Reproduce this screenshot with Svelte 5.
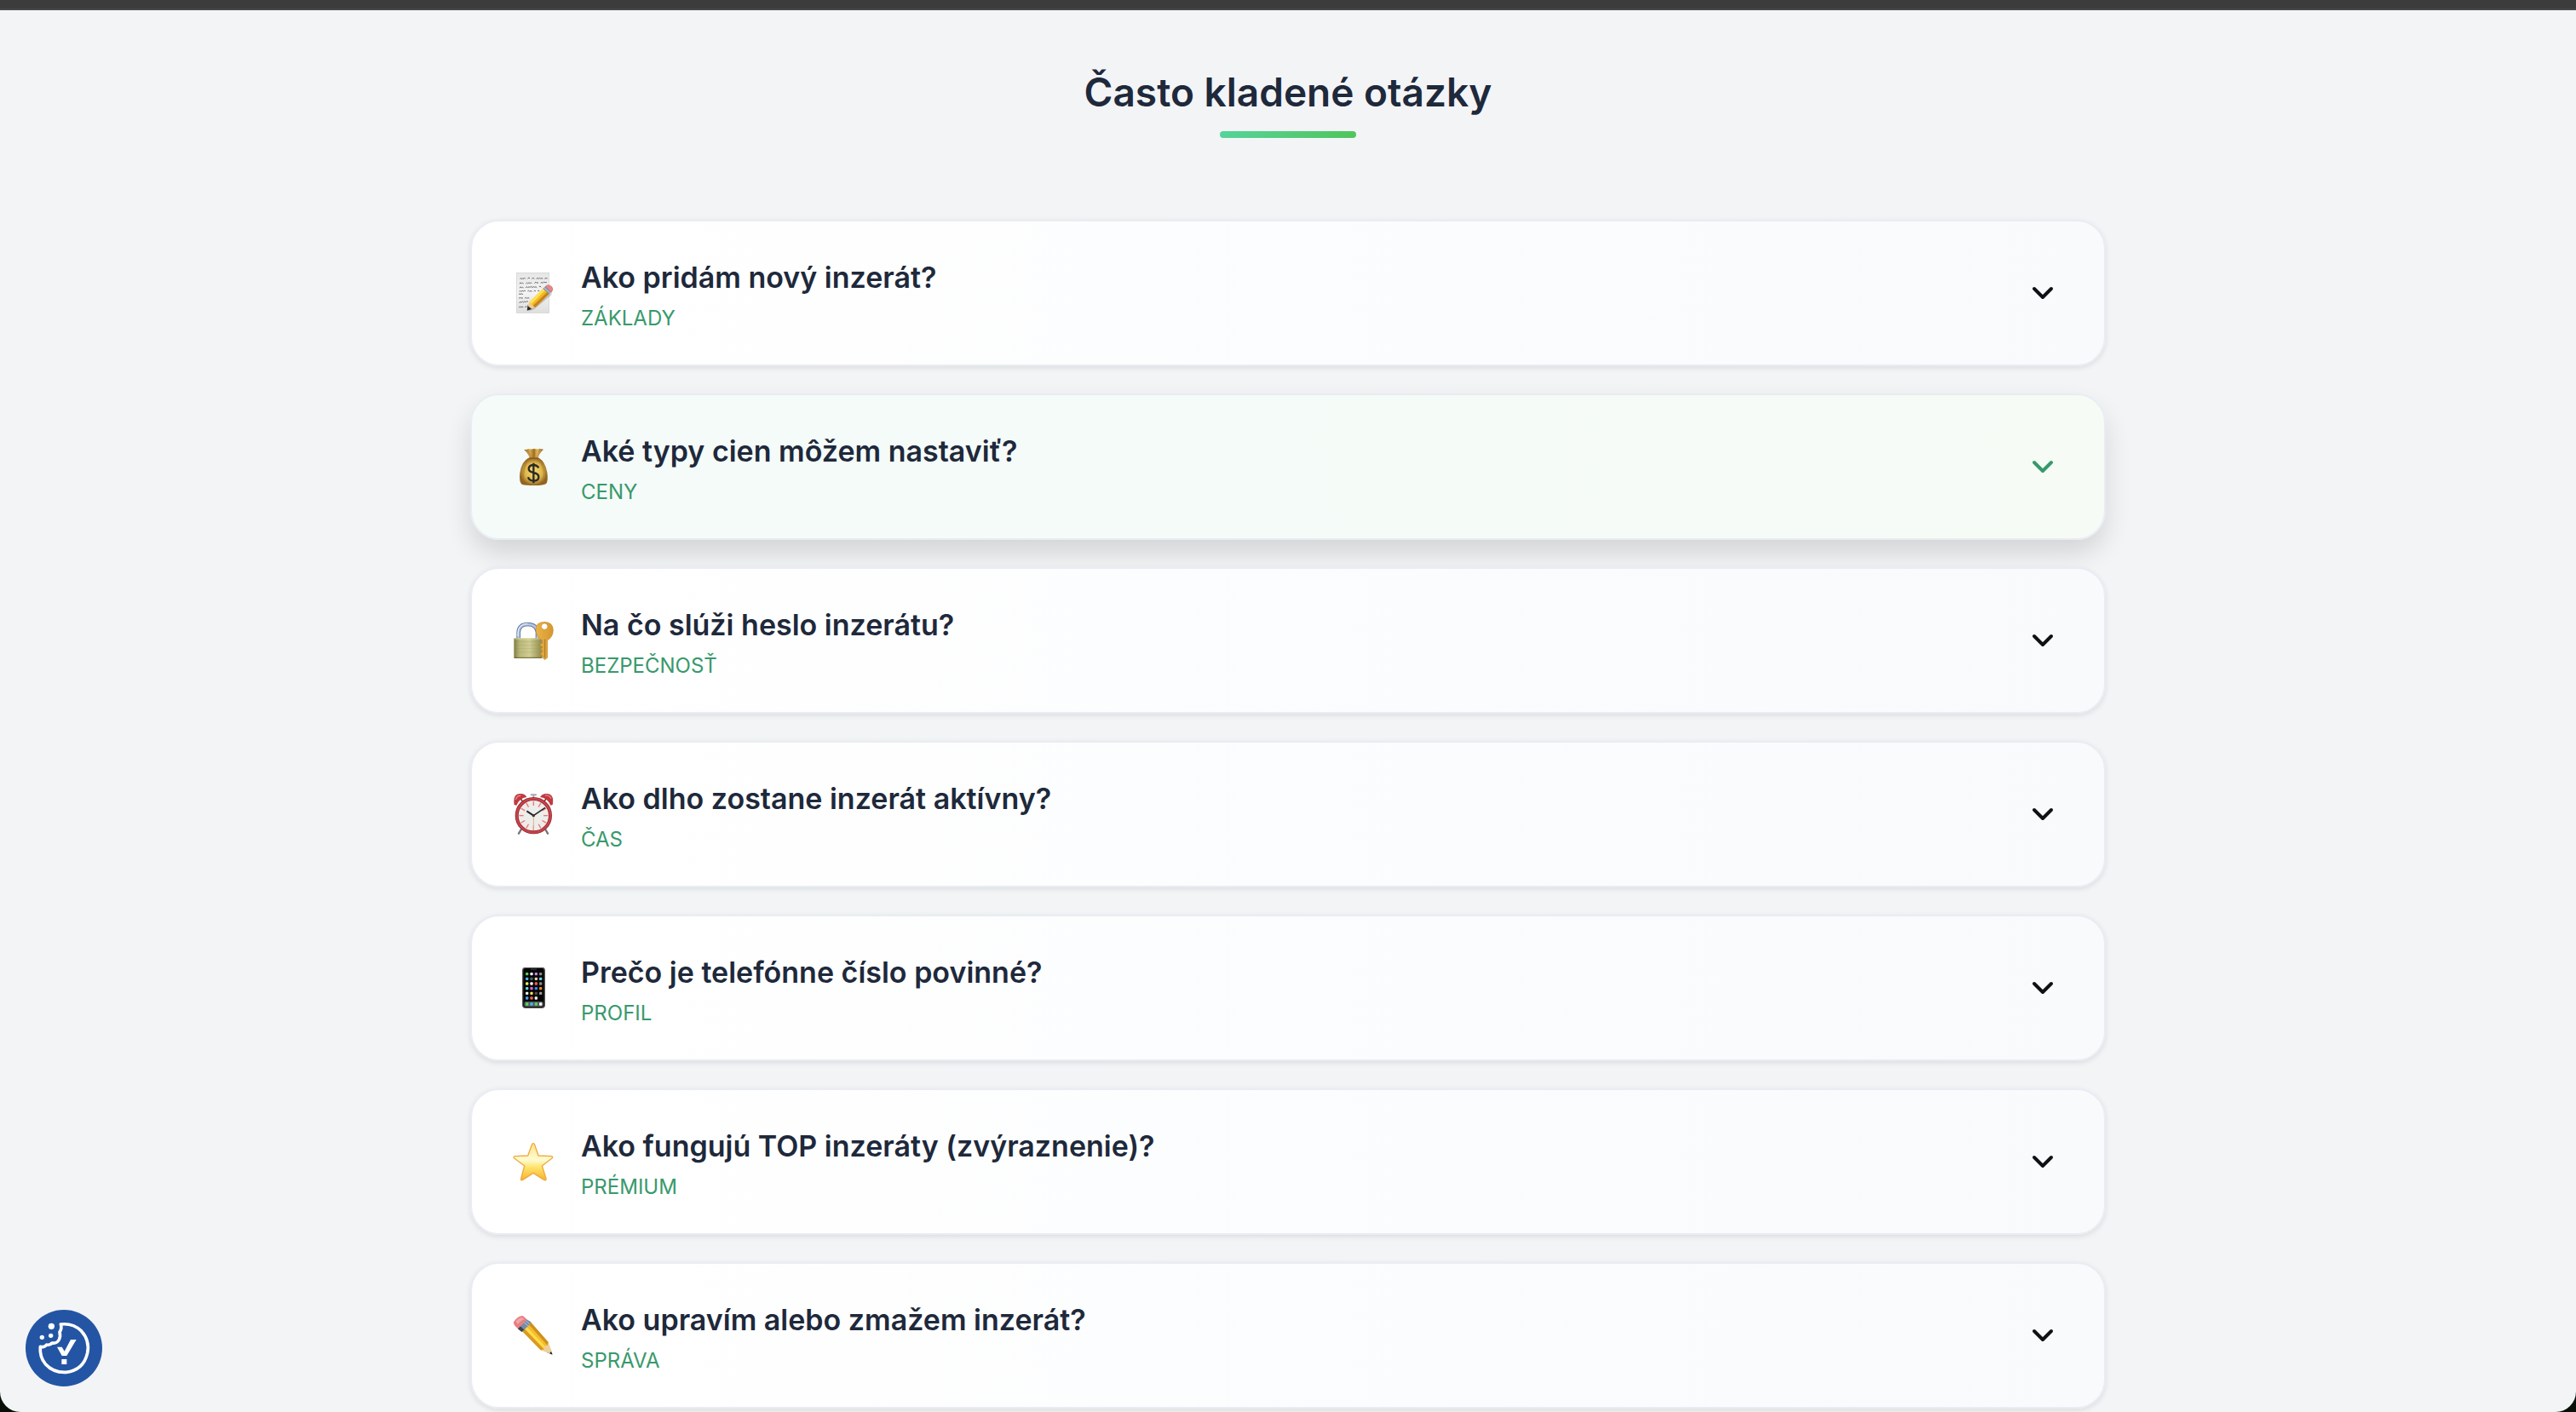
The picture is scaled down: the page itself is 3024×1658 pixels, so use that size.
<script>
  const items = [
    { icon: 'memo', title: 'Ako pridám nový inzerát?', tag: 'ZÁKLADY', box: '66 60 144 144' },
    { icon: 'money', title: 'Aké typy cien môžem nastaviť?', tag: 'CENY', box: '66 57 144 144', active: true },
    { icon: 'lock', title: 'Na čo slúži heslo inzerátu?', tag: 'BEZPEČNOSŤ', box: '66 69 144 144' },
    { icon: 'clock', title: 'Ako dlho zostane inzerát aktívny?', tag: 'ČAS', box: '66 66 144 144' },
    { icon: 'phone', title: 'Prečo je telefónne číslo povinné?', tag: 'PROFIL', box: '66 63 144 144' },
    { icon: 'star', title: 'Ako fungujú TOP inzeráty (zvýraznenie)?', tag: 'PRÉMIUM', box: '66 60 144 144' },
    { icon: 'pencil', title: 'Ako upravím alebo zmažem inzerát?', tag: 'SPRÁVA', box: '66 57 144 144' }
  ];

  const appRows = [
    ['#57d05a', '#f4f4f4', '#c08cf0', '#8a8a8a'],
    ['#4ab4f0', '#4a5a6a', '#e8d0a8', '#6ad4e8'],
    ['#f0e85a', '#f4f4f4', '#f05a50', '#8a8a8a'],
    ['#5ad8e0', '#e05ae8', '#3a8af0', '#f08a20'],
    ['#f4f4f4', '#f0e04a', '#4a4a4a', '#9a9a9a'],
    ['#4aa4f0', '#f05a50', '#f4f4f4']
  ];
  const dock = ['#5ad85a', '#4ab4f0', '#5ad85a', '#f8f8f8'];
  const ticks = [0, 30, 60, 90, 120, 150, 180, 210, 240, 270, 300, 330];
</script>

<div class="window">
  <div class="topbar"></div>
  <main>
    <h1>Často kladené otázky</h1>
    <div class="underline"></div>

    <div class="list">
      {#each items as item}
        <button class="card" class:active={item.active} type="button" aria-expanded="false">
          <svg class="icon" viewBox={item.box} aria-hidden="true">
            {#if item.icon === 'memo'}
              <defs>
                <linearGradient id="paper" x1="0" y1="0" x2="0" y2="1">
                  <stop offset="0" stop-color="#e6e6e6" /><stop offset=".5" stop-color="#f4f4f4" /><stop offset="1" stop-color="#dedede" />
                </linearGradient>
              </defs>
              <rect x="79" y="61" width="115" height="141" fill="url(#paper)" stroke="#d0d0d0" stroke-width="2" />
              <g fill="none" stroke="#4c4c4c" stroke-width="2.4">
                <path d="M91 83q4-7 6 0q4-4 8-1q3-6 5 0m9 0q2-7 7-2m7 2q5-6 9 0m7 0q4-5 8 0q3-6 7 0q4-5 8 0m6 0q5-4 10-1" />
                <path d="M90 100q3-9 7-1q4-4 7 0m8 0q4-6 7 0q4-7 8-1q4-5 6 0m10 0q3-9 7-1q3-4 6 0m8 0q4-5 8 0q4-8 8-1q3-4 6 0" />
                <path d="M90 115q3-9 7-1q4-4 7 0m7 0q4-8 8-1q4-5 8-1q4-6 8 1q4-6 8-1q4-4 8 1m8-2q2-7 7 1" />
                <path d="M88 127q4-5 7 0q4-5 9-1q3-5 7 0m7 0q3-6 7 1q4-5 9 0m6-1q4-5 7 0m6 0q3-6 7 0" />
                <path d="M88 138q3-8 5-1q4-4 9 0m-14 15q3-9 7-1q4-4 7 0m6 0q4-6 8 0q4-5 8 0" />
                <path d="M88 167q5-7 8-1q4-8 8-1q3-6 8-1q4-5 8-1m-32 21q3-9 7-1q4-5 8-1m6 1q3-8 7-1" />
              </g>
              <path d="M119 197L207 119L201 140L141 190Z" fill="#777" opacity=".35" />
              <path d="M116 194L119 173L134 188Z" fill="#25272b" />
              <path d="M119 178L124 164L144 181L132 188Z" fill="#eccb91" />
              <path d="M124 165L173 116L195 134L145 183Z" fill="#f2b728" />
              <path d="M124 165L173 116L180 122L132 171Z" fill="#ffdf50" />
              <path d="M137 177L188 128L195 134L145 183Z" fill="#c68316" />
              <path d="M172 117L181 108L202 127L194 136Z" fill="#8098ae" />
              <path d="M176 113L197 132" stroke="#cbd7e1" stroke-width="3" />
              <path d="M181 109Q190 99 203 110Q211 119 201 129Z" fill="#e88686" stroke="#c66c6f" stroke-width="2" />
            {:else if item.icon === 'money'}
              <defs>
                <radialGradient id="bag"><stop offset="0" stop-color="#f9dd6b" /><stop offset=".65" stop-color="#dcb44a" /><stop offset="1" stop-color="#916421" /></radialGradient>
                <linearGradient id="neck"><stop offset="0" stop-color="#946020" /><stop offset=".3" stop-color="#d8ac52" /><stop offset=".5" stop-color="#a97423" /><stop offset=".7" stop-color="#e2bd64" /><stop offset="1" stop-color="#8b581b" /></linearGradient>
              </defs>
              <path d="M121 98Q96 111 91 151Q88 181 96 190Q102 196 139 195Q177 195 184 188Q191 178 187 150Q181 112 158 98Z" fill="url(#bag)" />
              <path d="M123 101Q103 128 103 185M115 110Q100 140 97 184M157 101Q176 128 176 184M163 110Q184 143 183 178" fill="none" stroke="#99702a" stroke-width="3" opacity=".4" />
              <path d="M105 68Q113 70 121 66Q132 69 142 65Q153 69 160 65L174 68Q159 81 155 100H125Q121 82 105 68Z" fill="url(#neck)" />
              <path d="M119 71L130 97M142 69L141 97M160 70L151 97" stroke="#78501e" stroke-width="2" opacity=".5" />
              <rect x="123" y="97" width="34" height="5" rx="2" fill="#8a5d25" />
              <path d="M157 133Q151 123 138 123Q122 124 122 137Q123 147 139 150Q158 154 157 166Q156 179 139 179Q123 178 120 166M139 116V187" fill="none" stroke="#2b2a2b" stroke-width="7" />
            {:else if item.icon === 'lock'}
              <defs>
                <linearGradient id="brass"><stop offset="0" stop-color="#817c43" /><stop offset=".2" stop-color="#b9b878" /><stop offset=".55" stop-color="#cfcd92" /><stop offset="1" stop-color="#8d8747" /></linearGradient>
                <linearGradient id="key"><stop offset="0" stop-color="#eab347" /><stop offset="1" stop-color="#d5972f" /></linearGradient>
              </defs>
              <path d="M86 136V112Q88 84 119 84Q150 85 153 112V136" fill="none" stroke="#687b9e" stroke-width="14" />
              <path d="M86 136V112Q88 84 119 84Q150 85 153 112V136" fill="none" stroke="#b6c8e2" stroke-width="8" />
              <path d="M84 126V112Q87 83 117 82" fill="none" stroke="#edf5ff" stroke-width="3" />
              <rect x="70" y="133" width="100" height="71" rx="3" fill="url(#brass)" />
              <path d="M72 146H168M72 158H168M72 170H168M72 182H168" stroke="#8f8d50" stroke-width="2" opacity=".3" />
              <path d="M71 135H168" stroke="#ebe9b8" stroke-width="2" />
              <path d="M71 202H168" stroke="#6d662f" stroke-width="3" />
              <path fill-rule="evenodd" d="M147 102Q147 77 177 76Q208 77 208 105Q208 129 188 140V202L178 209L171 202V195L163 191L166 184L171 181V176L163 173L166 168H171V163L161 160L165 151H171V141Q147 131 147 102ZM177 81a11 11 0 1 0 1 0Z" fill="url(#key)" stroke="#ba7c20" stroke-width="1.5" />
              <path d="M179 137V203" stroke="#ae741e" stroke-width="3" />
            {:else if item.icon === 'clock'}
              <path d="M99 186L87 206M177 186L189 206" stroke="#737780" stroke-width="7" stroke-linecap="round" />
              <path d="M131 70H147M139 70V84" stroke="#a5a9b0" stroke-width="6" stroke-linecap="round" />
              <path d="M71 105Q65 69 89 66Q108 64 115 78Q89 82 79 107Z" fill="#c0393e" />
              <path d="M206 105Q213 69 189 66Q170 64 162 78Q189 82 199 107Z" fill="#c0393e" />
              <path d="M76 87Q80 73 94 72M180 72Q194 70 201 83" stroke="#e88686" stroke-width="4" fill="none" />
              <path d="M94 85L104 97M183 85L173 97" stroke="#7d3036" stroke-width="5" />
              <circle cx="139" cy="143" r="59" fill="#ededeb" stroke="#9b2630" stroke-width="12" />
              <circle cx="139" cy="143" r="59" fill="none" stroke="#c4444a" stroke-width="7" />
              {#each ticks as angle}
                <path d="M139 92V108" stroke="#ed7772" stroke-width="4" transform={`rotate(${angle} 139 143)`} />
              {/each}
              <path d="M139 143V192" stroke="#d8b58a" stroke-width="3" />
              <path d="M139 143L115 127" stroke="#24262b" stroke-width="6" />
              <path d="M139 143L180 115" stroke="#24262b" stroke-width="5" />
              <circle cx="139" cy="143" r="5" fill="#3d3632" />
            {:else if item.icon === 'phone'}
              <rect x="101" y="64" width="77" height="141" rx="10" fill="#050505" stroke="#555" stroke-width="4" />
              <rect x="128" y="67" width="23" height="6" rx="3" fill="#27272a" />
              {#each appRows as row, r}
                {#each row as color, c}
                  <rect x={111 + c * 16} y={81 + r * 17} width="10" height="10" rx="3" fill={color} />
                {/each}
              {/each}
              <rect x="106" y="183" width="67" height="18" rx="5" fill="#555a5e" />
              {#each dock as color, c}
                <rect x={111 + c * 16} y="187" width="10" height="10" rx="3" fill={color} />
              {/each}
            {:else if item.icon === 'star'}
              <defs>
                <linearGradient id="gold" x1="0" y1="0" x2="0" y2="1">
                  <stop offset="0" stop-color="#ffe58d" /><stop offset=".45" stop-color="#fffbcf" /><stop offset=".65" stop-color="#ffe36b" /><stop offset="1" stop-color="#f6b32c" />
                </linearGradient>
              </defs>
              <path d="M138 68Q141 67 143 73L156 111L202 113Q209 115 204 120L169 147L183 191Q184 200 177 197L138 172L100 197Q93 199 95 191L107 147L71 120Q66 115 74 113L119 111L133 73Q135 67 138 68Z" fill="url(#gold)" stroke="#eda943" stroke-width="4" stroke-linejoin="round" />
            {:else}
              <path d="M206 197L187 190L198 177Z" fill="#202126" />
              <path d="M163 181L190 152L203 184L195 193Z" fill="#edcf9a" />
              <path d="M96 111L127 80L191 153L188 164L178 166L176 178L164 181Z" fill="#f5bd2c" />
              <path d="M104 103L112 95L178 166L176 178Z" fill="#ffda49" />
              <path d="M119 87L127 80L191 153L188 164Z" fill="#cc9121" />
              <path d="M96 111L104 103L176 178L164 181Z" fill="#d79a22" />
              <path d="M83 105L115 73L130 82Q130 89 99 116Z" fill="#768ca8" />
              <path d="M83 105L92 97L106 109L97 117Z" fill="#3e4249" />
              <path d="M105 82L119 96M112 77L125 90" stroke="#b7cbe0" stroke-width="3" />
              <path d="M84 105Q65 91 70 80Q84 61 101 60L116 73Q111 82 84 105Z" fill="#e47f83" />
              <path d="M76 81Q85 67 99 67L107 73Q93 77 84 90Z" fill="#f3a5a4" />
            {/if}
          </svg>
          <span class="copy">
            <span class="title">{item.title}</span>
            <span class="tag">{item.tag}</span>
          </span>
          <svg class="chevron" viewBox="0 0 24 24" fill="none" stroke="currentColor" stroke-width="2" stroke-linecap="round" stroke-linejoin="round" aria-hidden="true">
            <path d="M7 9.5l5 5 5-5" />
          </svg>
        </button>
      {/each}
    </div>
  </main>
</div>

<button class="cookie" type="button" aria-label="Nastavenia cookies">
  <svg viewBox="90 84 270 270" aria-hidden="true">
    <path d="M214 135Q256 130 286 158Q317 192 308 236Q294 297 233 304Q188 306 160 275Q139 250 142 214Q156 218 164 207Q176 210 183 201Q200 204 208 189Q214 177 210 162Q219 150 214 135Z" fill="none" stroke="#fff" stroke-width="11" stroke-linejoin="round" />
    <circle cx="181" cy="142" r="11" fill="#fff" />
    <circle cx="179" cy="175" r="8" fill="#fff" />
    <circle cx="148" cy="181" r="8" fill="#fff" />
    <path d="M201 215H218L227 230L249 189H269L235 246H218Z" fill="#fff" />
    <rect x="217" y="258" width="18" height="18" fill="#fff" />
  </svg>
</button>

<style>
  :global(body) {
    background: #080f08;
  }
  .window {
    box-sizing: border-box;
    min-height: 100vh;
    background: #f3f4f6;
    border-radius: 0 0 24px 24px;
    font-family: Inter, 'Liberation Sans', sans-serif;
    color: #1e293b;
  }
  .topbar {
    box-sizing: border-box;
    height: 12px;
    background: #3c3c3c;
    border-bottom: 2px solid #484848;
  }
  main {
    max-width: 1920px;
    margin: 0 auto;
    padding-top: 64px;
  }
  h1 {
    margin: 0;
    text-align: center;
    font-size: 46px;
    line-height: 64px;
    font-weight: 600;
  }
  .underline {
    width: 160px;
    height: 8px;
    margin: 14px auto 96px;
    border-radius: 4px;
    background: linear-gradient(135deg, #55d49c, #50c45a);
  }
  .list {
    display: flex;
    flex-direction: column;
    gap: 32px;
  }
  .card {
    display: flex;
    align-items: center;
    gap: 32px;
    width: 100%;
    margin: 0;
    padding: 36px 48px;
    border: 2px solid #e9ecf3;
    border-radius: 34px;
    background: linear-gradient(90deg, #ffffff, #f8fafc);
    box-shadow: 0 2px 6px rgba(0, 0, 0, 0.1);
    font: inherit;
    color: #101114;
    text-align: left;
    cursor: pointer;
  }
  .active {
    background: linear-gradient(90deg, #f4fbf9, #f6fbf6);
    box-shadow: 0 16px 32px -2px rgba(0, 0, 0, 0.14);
  }
  .icon,
  .chevron {
    flex: none;
    width: 48px;
    height: 48px;
  }
  .active .chevron {
    color: #38996b;
  }
  .copy {
    display: flex;
    flex: 1;
    flex-direction: column;
    gap: 4px;
    padding-top: 4px;
  }
  .title {
    font-size: 34px;
    line-height: 52px;
    font-weight: 600;
    color: #1e293b;
  }
  .tag {
    font-size: 24px;
    line-height: 36px;
    color: #38996b;
  }
  .cookie {
    position: fixed;
    left: 30px;
    bottom: 30px;
    width: 90px;
    height: 90px;
    padding: 0;
    border: 0;
    border-radius: 50%;
    background: #2455a4;
    cursor: pointer;
  }
  .cookie svg {
    display: block;
    width: 100%;
    height: 100%;
  }
</style>
